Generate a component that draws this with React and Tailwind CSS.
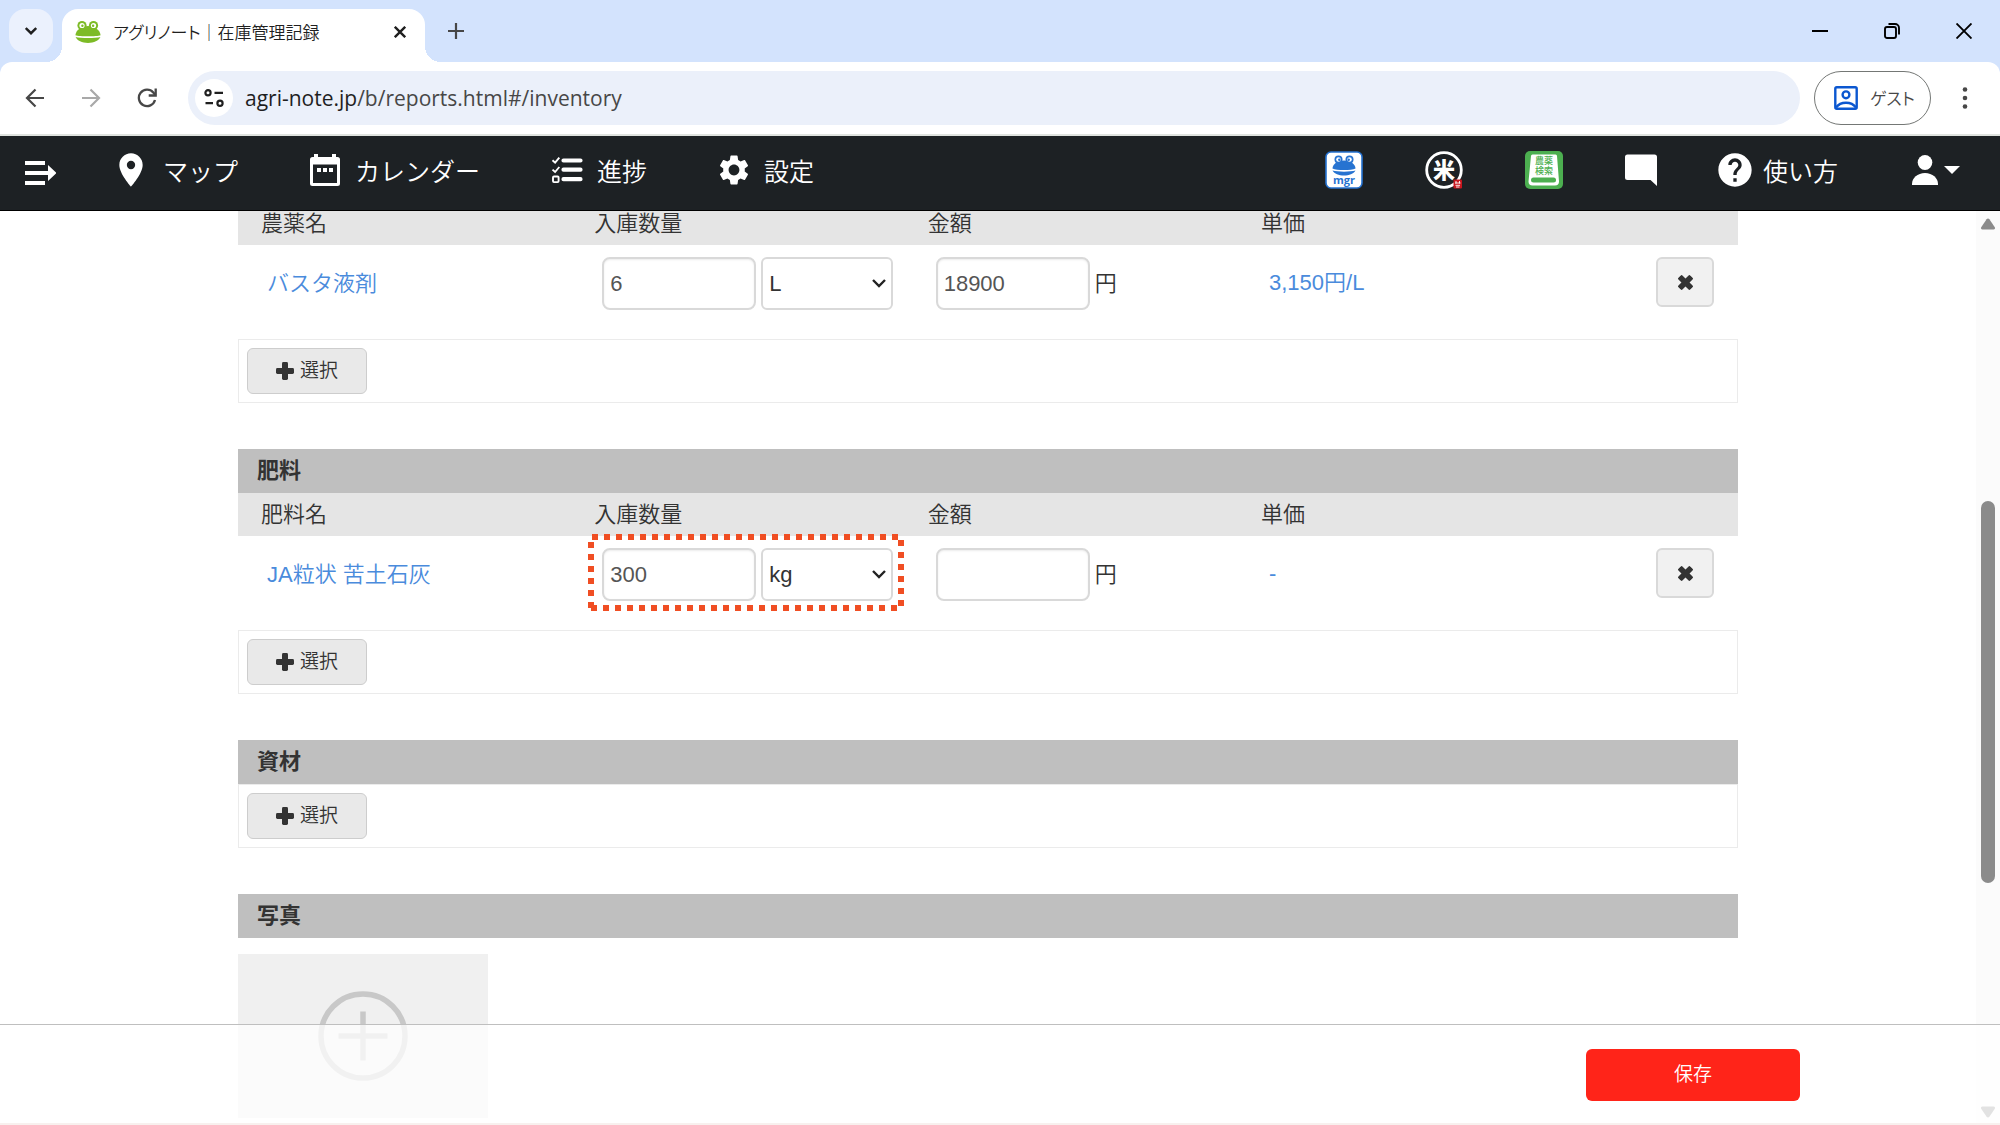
import React, { useState } from "react";
import { MdHelp, MdPlace, MdSettings } from "react-icons/md";

const units = ["L", "mL", "kg", "g"];

const FrogIcon = ({ className }) => (
  <svg viewBox="0 0 26 23" className={className} aria-hidden="true">
    <g fill="currentColor">
      <circle cx="7" cy="5" r="4.6" />
      <circle cx="18.5" cy="5" r="4.6" />
      <path d="M13 5.5C6.5 5.5 0.8 9.5 0.4 14.8c4 1.4 21.200 1.400 25.200 0C25.200 9.500 19.500 5.500 13 5.500z" />
      <path d="M0.600 16.600c1.600 3.600 6.400 5.900 12.400 5.900s10.800-2.300 12.400-5.900c-5 1.300-19.800 1.300-24.800 0z" />
    </g>
    <circle cx="7" cy="5" r="2.600" fill="#fff" />
    <circle cx="18.500" cy="5" r="2.600" fill="#fff" />
    <circle cx="7.400" cy="5.200" r="1.200" fill="currentColor" />
    <circle cx="18.100" cy="5.200" r="1.200" fill="currentColor" />
  </svg>
);

const PlusIcon = ({ className }) => (
  <svg viewBox="0 0 18 18" className={className} fill="currentColor" aria-hidden="true">
    <rect x="6" y="0" width="6" height="18" rx="1.400" />
    <rect x="0" y="6" width="18" height="6" rx="1.400" />
  </svg>
);

const CalendarIcon = () => (
  <svg viewBox="0 0 32 32" className="size-8" aria-hidden="true">
    <path
      fill="#fff"
      fillRule="evenodd"
      d="M5 0h4v3h14V0h4v3h1.500A2.500 2.500 0 0 1 31 5.500v24a2.500 2.500 0 0 1-2.500 2.500h-25A2.500 2.500 0 0 1 1 29.500v-24A2.500 2.500 0 0 1 3.500 3H5zM4 10.500v18.500h24V10.500z"
    />
    <path fill="#fff" d="M8 14h4v4H8zM14 14h4v4h-4zM20 14h4v4h-4z" />
  </svg>
);

const ProgressIcon = () => (
  <svg viewBox="0 0 32 32" className="size-8" fill="none" stroke="#fff" aria-hidden="true">
    <path d="M12.500 6.500h17M12.500 15.700h17M12.500 25.200h17" strokeWidth="4.200" strokeLinecap="round" />
    <path d="M1.500 6.200l2.600 2.400 4.200-5M1.500 15.600l2.600 2.400 4.200-5" strokeWidth="1.900" />
    <rect x="2" y="22.500" width="5.600" height="5.600" rx="1" strokeWidth="1.900" />
  </svg>
);

const menus = [
  { label: "マップ", icon: <MdPlace className="-mr-0.5 -ml-1 size-10" /> },
  { label: "カレンダー", icon: <CalendarIcon /> },
  { label: "進捗", icon: <ProgressIcon /> },
  { label: "設定", icon: <MdSettings className="-mx-0.5 size-9" /> },
];

const WindowButtons = () => (
  <div className="ml-auto flex self-stretch text-black">
    <button type="button" aria-label="最小化" className="flex w-[72px] items-center justify-center">
      <svg viewBox="0 0 16 16" className="size-4" stroke="currentColor" strokeWidth="2">
        <path d="M0 8h16" />
      </svg>
    </button>
    <button type="button" aria-label="元に戻す" className="flex w-[72px] items-center justify-center">
      <svg viewBox="0 0 16 16" className="size-4" fill="none" stroke="currentColor" strokeWidth="1.900">
        <rect x="1" y="4" width="11" height="11" rx="2" />
        <path d="M4.500 1H11a4 4 0 0 1 4 4v6.500" />
      </svg>
    </button>
    <button type="button" aria-label="閉じる" className="flex w-[72px] items-center justify-center">
      <svg viewBox="0 0 16 16" className="size-4" stroke="currentColor" strokeWidth="1.900">
        <path d="M0.500 0.500l15 15M15.500 0.500l-15 15" />
      </svg>
    </button>
  </div>
);

const BrowserChrome = () => (
  <div className="shrink-0 bg-[#d3e3fd] font-['Noto_Sans_CJK_JP',sans-serif]">
    {/* tab strip */}
    <div className="flex h-[62px] items-center">
      <button
        type="button"
        aria-label="タブを検索"
        className="ml-[9px] flex size-11 items-center justify-center rounded-2xl bg-[#ebf1fd]"
      >
        <svg viewBox="0 0 12 8" className="h-2 w-3" fill="none" stroke="#1f1f1f" strokeWidth="2.400">
          <path d="M0.800 1L6 6.200 11.200 1" />
        </svg>
      </button>
      <div className="relative ml-[9px] flex h-[53px] w-[363px] items-center self-end rounded-t-2xl bg-white pb-2 pl-[13px]">
        <span className="absolute -left-4 bottom-0 size-4 bg-[radial-gradient(circle_at_0_0,transparent_16px,#fff_16px)]" />
        <span className="absolute -right-4 bottom-0 size-4 bg-[radial-gradient(circle_at_100%_0,transparent_16px,#fff_16px)]" />
        <FrogIcon className="h-6 w-[26px] text-[#7dbb26]" />
        <span className="ml-3 text-[17px] leading-6 font-[350] whitespace-nowrap text-[#1f1f1f] [font-feature-settings:'palt']">
          アグリノート｜在庫管理記録
        </span>
        <button type="button" aria-label="タブを閉じる" className="mr-[18px] ml-auto p-px">
          <svg viewBox="0 0 12 12" className="size-3" stroke="#1f1f1f" strokeWidth="2.400">
            <path d="M0.800 0.800l10.400 10.400M11.200 0.800L0.800 11.200" />
          </svg>
        </button>
      </div>
      <button type="button" aria-label="新しいタブ" className="ml-[23px]">
        <svg viewBox="0 0 16 16" className="size-4" stroke="#474747" strokeWidth="2.200">
          <path d="M8 0v16M0 8h16" />
        </svg>
      </button>
      <WindowButtons />
    </div>

    {/* toolbar */}
    <div className="flex h-[74px] items-center rounded-t-xl border-b-2 border-[#dfe3df] bg-white pr-8 pl-[25px]">
      <button type="button" aria-label="戻る">
        <svg viewBox="0 0 20 20" className="size-5" fill="none" stroke="#474747" strokeWidth="2.200">
          <path d="M19 10H2.500M10.500 1.500L2 10l8.500 8.500" />
        </svg>
      </button>
      <button type="button" aria-label="進む" className="ml-9">
        <svg viewBox="0 0 20 20" className="size-5" fill="none" stroke="#a9a9a9" strokeWidth="2.200">
          <path d="M1 10h16.500M9.500 1.500L18 10l-8.500 8.500" />
        </svg>
      </button>
      <button type="button" aria-label="再読み込み" className="ml-9">
        <svg viewBox="0 0 20 20" className="size-5" fill="none" stroke="#474747" strokeWidth="2.300">
          <path d="M18 12A8.200 8.200 0 1 1 16.300 4.500L18.500 7.200" />
          <path d="M18.700 0.500v7h-7" />
        </svg>
      </button>
      <div className="ml-[31px] flex h-[54px] flex-1 items-center rounded-full bg-[#ebf0fa] pl-[7px]">
        <button
          type="button"
          aria-label="サイト情報"
          className="flex size-[38px] items-center justify-center rounded-full bg-white"
        >
          <svg viewBox="0 0 20 20" className="size-5" fill="none" stroke="#1f1f1f" strokeWidth="2.200">
            <circle cx="4" cy="4.800" r="2.600" />
            <path d="M10.500 4.800H19M1.500 15.200H9" />
            <circle cx="16" cy="15.200" r="2.600" />
          </svg>
        </button>
        <p className="ml-3 font-['Open_Sans',sans-serif] text-[21px] leading-7 text-[#474747]">
          <span className="text-[#1f1f1f]">agri-note.jp</span>/b/reports.html#/inventory
        </p>
      </div>
      <button
        type="button"
        className="ml-[14px] flex h-[54px] w-[117px] items-center gap-3 rounded-full border border-[#747775] pl-[19px] text-[#474747]"
      >
        <svg viewBox="0 0 24 24" className="size-6 shrink-0" fill="none" stroke="#0b57d0" strokeWidth="2.400">
          <rect x="1.300" y="1.300" width="21.400" height="21.400" rx="1.500" />
          <circle cx="12" cy="8.800" r="3.400" />
          <path d="M2 21.500c2.500-3.500 6-4.800 10-4.800s7.500 1.300 10 4.800" />
        </svg>
        <span className="text-[17px] leading-6 font-[350] whitespace-nowrap [font-feature-settings:'palt']">
          ゲスト
        </span>
      </button>
      <button type="button" aria-label="メニュー" className="ml-[31px]">
        <svg viewBox="0 0 6 22" className="h-[22px] w-1.5" fill="#474747">
          <circle cx="3" cy="2.500" r="2.300" />
          <circle cx="3" cy="11" r="2.300" />
          <circle cx="3" cy="19.500" r="2.300" />
        </svg>
      </button>
    </div>
  </div>
);

const Header = () => (
  <header className="flex h-[75px] shrink-0 items-center border-b border-black bg-[#1d2124] pr-10 pb-1.5 pl-6 font-['Noto_Sans_CJK_JP',sans-serif] text-[25px] leading-8 font-[350] text-white">
    <button type="button" aria-label="サイドメニュー" className="mt-1.5">
      <svg viewBox="0 0 32 26" className="h-[26px] w-8" fill="#fff">
        <path d="M1 1h20v4H1zM1 11h20v4H1zM1 21h20v4H1zM24 5l8.500 8-8.500 8zM20 11h6v4h-6z" />
      </svg>
    </button>
    <nav className="ml-[59px] flex items-center gap-[71px]">
      {menus.map((menu) => (
        <a key={menu.label} href="#" className="flex items-center gap-[14px] whitespace-nowrap">
          {menu.icon}
          {menu.label}
        </a>
      ))}
    </nav>

    {/* linked services and account */}
    <div className="ml-auto flex items-center gap-[62px]">
      <a href="#" aria-label="アグリノートマネージャー">
        <svg viewBox="0 0 38 38" className="size-[38px]">
          <rect x="1" y="1" width="36" height="36" rx="5" fill="#fff" stroke="#2673d1" strokeWidth="1.600" />
          <g fill="#2673d1">
            <circle cx="13.500" cy="8.500" r="4" />
            <circle cx="24.500" cy="8.500" r="4" />
            <path d="M19 9.500c-6.500 0-11.200 3.500-11.500 8 4 2 19 2 23 0-.3-4.500-5-8-11.500-8z" />
            <path d="M7.500 19.500c2 3.500 6.200 5 11.500 5s9.500-1.500 11.500-5c-5 1.500-18 1.500-23 0z" />
          </g>
          <circle cx="13.500" cy="8.500" r="2.300" fill="#fff" />
          <circle cx="24.500" cy="8.500" r="2.300" fill="#fff" />
          <circle cx="14.300" cy="8.800" r="1.200" fill="#2673d1" />
          <circle cx="23.700" cy="8.800" r="1.200" fill="#2673d1" />
          <text x="19" y="33" textAnchor="middle" fill="#2673d1" fontSize="11" fontWeight="700" fontFamily="Open Sans, sans-serif">
            mgr
          </text>
        </svg>
      </a>
      <a href="#" aria-label="米">
        <svg viewBox="0 0 38 38" className="size-[38px]">
          <circle cx="19" cy="19" r="17.300" fill="none" stroke="#fff" strokeWidth="2.800" />
          <text x="19" y="27" textAnchor="middle" fill="#fff" fontSize="22" fontWeight="900" fontFamily="Noto Sans CJK JP, sans-serif">
            米
          </text>
          <rect x="28.500" y="28.500" width="8.500" height="9" rx="1" fill="#c8161e" />
          <path d="M31 30v2.500M34.500 30v2.500M30 32h5.500M30.500 34.300h4.500M31 36h3.500" stroke="#fff" strokeWidth="0.900" />
        </svg>
      </a>
      <a href="#" aria-label="農薬検索">
        <svg viewBox="0 0 38 38" className="size-[38px]">
          <rect width="38" height="38" rx="5" fill="#4caf50" />
          <path d="M7.500 3.500h23a1.500 1.500 0 0 1 1.500 1.500l2 25.500a4 4 0 0 1-4 4H7.500a4 4 0 0 1-4-4L6 5a1.500 1.500 0 0 1 1.500-1.500z" fill="#fff" />
          <rect x="6" y="26.500" width="25" height="5" rx="2.500" fill="#4caf50" />
          <g fill="#4caf50" fontSize="9" fontWeight="500" textAnchor="middle" fontFamily="Noto Sans CJK JP, sans-serif">
            <text x="19" y="13">農薬</text>
            <text x="19" y="23">検索</text>
          </g>
        </svg>
      </a>
      <a href="#" aria-label="メッセージ">
        <svg viewBox="0 0 32 32" className="size-8" fill="#fff">
          <path d="M2.500 0.500h27A2.500 2.500 0 0 1 32 3v29l-6.500-6h-23A2.500 2.500 0 0 1 0 23.500V3A2.500 2.500 0 0 1 2.500 0.500z" />
        </svg>
      </a>
      <a href="#" className="flex items-center gap-2 whitespace-nowrap">
        <MdHelp className="-ml-1 size-10" />
        使い方
      </a>
      <button type="button" aria-label="アカウント" className="ml-3 flex items-center gap-1.5">
        <svg viewBox="0 0 26 30" className="h-[30px] w-[26px]" fill="#fff">
          <ellipse cx="13" cy="7.500" rx="7.300" ry="7.500" />
          <path d="M0 30v-1c0-6 5.500-11 13-11s13 5 13 11v1z" />
        </svg>
        <svg viewBox="0 0 16 8" className="h-2 w-4" fill="#fff">
          <path d="M0 0h16L8 8z" />
        </svg>
      </button>
    </div>
  </header>
);

const SectionTitle = ({ children }) => (
  <h2 className="flex h-11 items-center bg-[#bfbfbf] pl-[19px] text-[22px] leading-8 font-bold">{children}</h2>
);

const AddBox = ({ label }) => (
  <div className="border border-[#ebebeb] p-2">
    <button
      type="button"
      aria-label={`${label}を選択`}
      className="flex h-[46px] w-[120px] items-center justify-center gap-1.5 rounded-md border border-[#cdcdcd] bg-[#e9e9e9] text-[19px] leading-7 font-[350]"
    >
      <PlusIcon className="size-[18px]" />
      選択
    </button>
  </div>
);

// dashed frame round the quantity and unit fields
const Highlight = () => (
  <svg
    viewBox="0 0 316 77"
    className="pointer-events-none absolute -top-[14px] -left-[14px] h-[77px] w-[316px]"
    stroke="#f04e23"
    strokeWidth="6"
    strokeDasharray="6 6"
    aria-hidden="true"
  >
    <path d="M4 3H310M3 8V74M3 74H310M313 6V72" />
  </svg>
);

const inputClass =
  "h-[53px] w-[154px] rounded-lg border-2 border-[#d9d9d9] bg-white px-[6px] text-[22px] text-[#555] shadow-[inset_0_1px_2px_rgba(0,0,0,0.08)] outline-none";

const StockTable = ({ label, item, highlight }) => {
  const [amount, setAmount] = useState(item.amount);
  const [unit, setUnit] = useState(item.unit);
  const [price, setPrice] = useState(item.price);

  return (
    <table className="w-full table-fixed border-collapse text-left">
      <thead>
        <tr className="h-[43px] bg-[#e5e5e5] text-[22px] leading-8">
          <th className="w-2/9 pl-[23px] font-[350]">{label}名</th>
          <th className="w-2/9 pl-[23px] font-[350]">入庫数量</th>
          <th className="w-2/9 pl-[23px] font-[350]">金額</th>
          <th className="w-2/9 pl-[23px] font-[350]">単価</th>
          <th aria-label="操作" />
        </tr>
      </thead>
      <tbody>
        <tr className="h-[94px] align-top text-[22px]">
          <td className="pt-3 pl-[29px]">
            <a href="#" className="flex h-[53px] items-center font-[350] text-[#4a8bdc]">
              {item.name}
            </a>
          </td>
          <td className="pt-3 pl-[31px]">
            <div className="relative flex gap-[5px]">
              <input
                type="text"
                aria-label="入庫数量"
                value={amount}
                onChange={(e) => setAmount(e.target.value)}
                className={inputClass}
              />
              <div className="relative">
                <select
                  aria-label="単位"
                  value={unit}
                  onChange={(e) => setUnit(e.target.value)}
                  className="h-[53px] w-[132px] appearance-none rounded-md border-2 border-[#d9d9d9] bg-white pl-[6px] text-[22px] text-[#333] outline-none"
                >
                  {units.map((u) => (
                    <option key={u}>{u}</option>
                  ))}
                </select>
                <svg
                  viewBox="0 0 14 9"
                  className="pointer-events-none absolute top-[22px] right-[7px] h-[9px] w-[14px]"
                  fill="none"
                  stroke="#222"
                  strokeWidth="2.400"
                >
                  <path d="M1 1l6 6 6-6" />
                </svg>
              </div>
              {highlight && <Highlight />}
            </div>
          </td>
          <td className="pt-3 pl-[31px]">
            <label className="flex items-center gap-[5px] font-[350]">
              <input
                type="text"
                value={price}
                onChange={(e) => setPrice(e.target.value)}
                className={inputClass}
              />
              円
            </label>
          </td>
          <td className="pt-3 pl-[31px]">
            <span className="flex h-[50px] items-center font-[350] text-[#4a8bdc]">{item.unitPrice}</span>
          </td>
          <td className="pt-3 pr-6">
            <button
              type="button"
              aria-label="削除"
              className="ml-auto flex h-[50px] w-[58px] items-center justify-center rounded-md border-2 border-[#d9d9d9] bg-[#f1f1f1]"
            >
              <PlusIcon className="size-[17px] rotate-45" />
            </button>
          </td>
        </tr>
      </tbody>
    </table>
  );
};

const Scrollbar = () => (
  <div className="flex w-6 shrink-0 flex-col items-center bg-[#fbfbfb] pt-[7px] pb-[5px]" aria-hidden="true">
    <svg viewBox="0 0 16 12" className="h-3 w-4" fill="#8b8b8b">
      <path d="M8 0.500c.6 0 1 .3 1.400.8l5.400 8c.6 1 0 2.200-1.200 2.200H2.400c-1.200 0-1.800-1.200-1.200-2.200l5.400-8C7 .8 7.400.5 8 .5z" />
    </svg>
    <div className="grow-[271]" />
    <div className="w-[14px] grow-[382] rounded-full bg-[#8b8b8b]" />
    <div className="grow-[223]" />
    <svg viewBox="0 0 16 12" className="h-3 w-4 rotate-180" fill="#8b8b8b">
      <path d="M8 0.500c.6 0 1 .3 1.400.8l5.400 8c.6 1 0 2.200-1.200 2.200H2.400c-1.200 0-1.800-1.200-1.200-2.200l5.400-8C7 .8 7.400.5 8 .5z" />
    </svg>
  </div>
);

const App = () => {
  return (
    <div className="flex h-screen flex-col overflow-hidden bg-white">
      <BrowserChrome />
      <Header />

      <div className="relative flex min-h-0 flex-1 border-b-2 border-[#f8f0ee] font-['Liberation_Sans','Noto_Sans_CJK_JP',sans-serif] text-[#333]">
        <main className="flex-1 overflow-hidden">
          <div className="mx-auto -mt-[9px] flex max-w-[1500px] flex-col gap-[46px]">
            <section>
              <StockTable
                label="農薬"
                item={{ name: "バスタ液剤", amount: "6", unit: "L", price: "18900", unitPrice: "3,150円/L" }}
              />
              <AddBox label="農薬" />
            </section>

            <section>
              <SectionTitle>肥料</SectionTitle>
              <StockTable
                label="肥料"
                item={{ name: "JA粒状 苦土石灰", amount: "300", unit: "kg", price: "", unitPrice: "-" }}
                highlight
              />
              <AddBox label="肥料" />
            </section>

            <section>
              <SectionTitle>資材</SectionTitle>
              <AddBox label="資材" />
            </section>

            <section>
              <SectionTitle>写真</SectionTitle>
              <button
                type="button"
                aria-label="写真を追加"
                className="mt-4 flex h-[164px] w-[250px] items-center justify-center bg-[#f0f0f0]"
              >
                <svg viewBox="0 0 90 90" className="size-[90px]" fill="none" stroke="#c8c8c8" strokeWidth="5.500">
                  <circle cx="45" cy="45" r="42" />
                  <path d="M45 20.500v49M20.500 45h49" />
                </svg>
              </button>
            </section>
          </div>
        </main>
        <Scrollbar />

        {/* save bar, lies over the form */}
        <footer className="absolute inset-x-0 bottom-0 flex h-[99px] justify-end border-t border-[#bfbfbf] bg-white/75 pt-6 pr-[10%]">
          <button
            type="button"
            className="h-[52px] w-[214px] rounded-md bg-[#ff2419] text-[19px] leading-7 font-[350] text-white"
          >
            保存
          </button>
        </footer>
      </div>
    </div>
  );
};

export default App;
